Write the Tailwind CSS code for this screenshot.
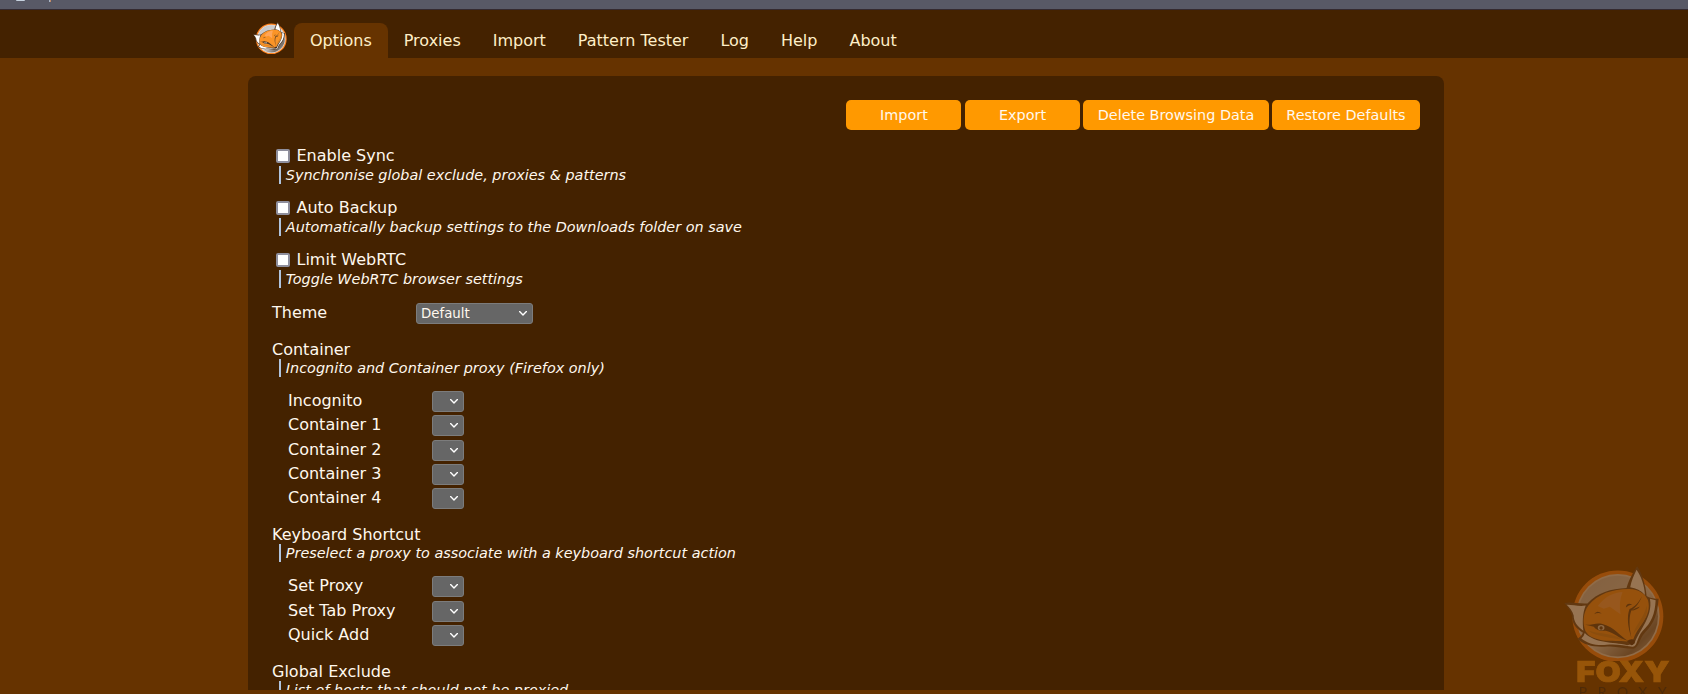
<!DOCTYPE html>
<html lang="en">
<head>
<meta charset="utf-8">
<title>FoxyProxy Options</title>
<script src="https://cdn.jsdelivr.net/npm/@tailwindcss/browser@4"></script>
</head>
<body class="h-[694px] overflow-hidden bg-[#663300] font-['DejaVu_Sans',sans-serif] text-base leading-[18px] text-[#fff8ee]">
<svg class="absolute size-0" xmlns="http://www.w3.org/2000/svg">
  <defs>
    <linearGradient id="silver" x1="0" y1="0" x2="1" y2="1"><stop offset="0" stop-color="#bfc1c6"/><stop offset=".55" stop-color="#d6d6d6"/><stop offset=".8" stop-color="#77706c"/><stop offset="1" stop-color="#c8c8c8"/></linearGradient>
  </defs>
  <symbol id="fox" viewBox="75 53 300 282" preserveAspectRatio="none">
    <circle cx="236" cy="202" r="136" fill="#ff8420"/>
    <circle cx="236" cy="202" r="125" fill="#e9e4e0"/>
    <circle cx="236" cy="202" r="120" fill="url(#silver)"/>
    <path d="M76 163C95 158 120 166 145 164C175 132 215 120 262 118C270 92 284 67 294 54C308 75 320 110 322 142Q336 151 358 150C354 195 346 222 316 252C300 270 300 294 282 299C258 299 230 290 204 292C170 296 134 288 115 270Q127 262 132 251C112 240 98 222 99 202C96 188 86 176 76 163Z" fill="#5c4634"/>
    <path d="M83 168C103 168 122 174 140 170C130 192 130 222 133 245C114 232 104 218 104 200C100 186 92 176 83 168Z" fill="#fff"/>
    <path d="M292 64C306 84 316 112 317 139C306 126 290 118 273 116C276 98 284 80 292 64Z" fill="#fff"/>
    <path d="M127 268Q134 264 137 252C170 284 220 278 264 288L286 283C294 250 342 206 332 150L349 155C347 196 336 222 310 246C292 266 296 290 280 293C254 288 228 284 202 287C172 290 145 283 127 268Z" fill="#fff"/>
    <path d="M148 170C176 134 226 120 270 121C300 122 318 136 326 154C340 205 292 232 281 276L264 277C222 274 160 282 139 246C130 220 132 192 148 170Z" fill="#fb9427"/>
    <path d="M176 172C200 140 225 132 250 130Q238 160 244 196L212 174L194 180Z" fill="#ffa65a"/>
    <path d="M146 244C172 266 222 264 254 274C220 250 176 256 146 244ZM322 170C316 204 290 226 281 256C300 232 330 210 322 170Z" fill="#d8862a"/>
    <path d="M134 227C158 230 170 220 190 225C226 234 244 262 266 275C240 268 220 248 200 245C182 247 170 242 164 233Q150 230 134 227Z" fill="#513823"/>
    <ellipse cx="186" cy="236" rx="10" ry="8" fill="#dcd6cf"/><circle cx="186" cy="237" r="5" fill="#513823"/>
    <path d="M165 196Q173 182 188 194Q174 191 165 196ZM260 176Q262 160 279 167Q268 168 260 176ZM308 142C302 162 290 174 276 186C267 210 272 246 277 268C266 236 262 204 271 181C286 174 299 162 308 142ZM276 185Q294 184 302 173Q288 177 276 185Z" fill="#513823"/>
    <path d="M263 276Q277 266 287 274Q286 288 276 288Z" fill="#3e2b22"/>
  </symbol>
  <symbol id="chevron" viewBox="0 0 8 5"><path d="M.6 .6L4 4L7.4 .6" fill="none" stroke="#fff" stroke-width="1.4" stroke-linecap="round" stroke-linejoin="round"/></symbol>
</svg>

<div class="relative h-[9px] bg-[#585966]">
  <div class="absolute top-0 left-4 h-px w-[9px] rounded-b bg-[#c6d2df]"></div>
  <div class="absolute top-0 left-[49px] h-0.5 w-px bg-[#a9b5c5]"></div>
  <div class="absolute top-0 left-[50px] h-0.5 w-px bg-[#c08a68]"></div>
</div>
<nav class="flex h-[49px] items-end border-t border-[#342a30] bg-[#442200] pl-[253px] text-[#ffefc8]">
  <svg class="mr-[7px] mb-1 h-[32px] w-[34px]"><use href="#fox"/></svg>
  <div class="flex h-[35px] items-center whitespace-nowrap">
    <a class="flex h-full items-center rounded-t-lg bg-[#663300] px-4">Options</a>
    <a class="px-4">Proxies</a>
    <a class="px-4">Import</a>
    <a class="px-4">Pattern Tester</a>
    <a class="px-4">Log</a>
    <a class="px-4">Help</a>
    <a class="px-4">About</a>
  </div>
</nav>

<main class="mt-[18px] ml-[248px] h-[614px] w-[1196px] overflow-hidden rounded-t-lg bg-[#442200] px-6 pt-6">
  <div class="flex h-[30px] justify-end gap-1 text-[14.4px] whitespace-nowrap">
    <button class="w-[115px] rounded-[5px] bg-[#ff9900] pl-px">Import</button>
    <button class="w-[115px] rounded-[5px] bg-[#ff9900]">Export</button>
    <button class="-ml-px w-[186px] rounded-[5px] bg-[#ff9900]">Delete Browsing Data</button>
    <button class="-ml-px w-[148px] rounded-[5px] bg-[#ff9900]">Restore Defaults</button>
  </div>

  <section class="mt-[17px] flex flex-col gap-4 whitespace-nowrap">
    <div class="h-9">
      <label class="flex h-[18px] items-center"><span class="mr-[6.5px] mb-px ml-1 size-3.5 rounded-xs border-2 border-[#8f8f9d] bg-white"></span>Enable Sync</label>
      <p class="mt-px ml-[7px] border-l-2 border-[#b0c4de] pl-[4.8px] text-[14.4px] italic">Synchronise global exclude, proxies &amp; patterns</p>
    </div>
    <div class="h-9">
      <label class="flex h-[18px] items-center"><span class="mr-[6.5px] mb-px ml-1 size-3.5 rounded-xs border-2 border-[#8f8f9d] bg-white"></span>Auto Backup</label>
      <p class="mt-px ml-[7px] border-l-2 border-[#b0c4de] pl-[4.8px] text-[14.4px] italic">Automatically backup settings to the Downloads folder on save</p>
    </div>
    <div class="h-9">
      <label class="flex h-[18px] items-center"><span class="mr-[6.5px] mb-px ml-1 size-3.5 rounded-xs border-2 border-[#8f8f9d] bg-white"></span>Limit WebRTC</label>
      <p class="mt-px ml-[7px] border-l-2 border-[#b0c4de] pl-[4.8px] text-[14.4px] italic">Toggle WebRTC browser settings</p>
    </div>
  </section>

  <div class="mt-4 flex h-[21px]">
    <span class="w-36 pt-px">Theme</span>
    <span class="flex h-[21px] w-[117px] items-center justify-between rounded-[3px] border border-[#7c7c7c] bg-[#666666] pr-[5px] pl-1 text-[13.33px]">Default<svg class="h-[5px] w-2"><use href="#chevron"/></svg></span>
  </div>

  <section class="mt-[17px] whitespace-nowrap">
    <h2>Container</h2>
    <p class="ml-[7px] border-l-2 border-[#b0c4de] pl-[4.8px] text-[14.4px] italic">Incognito and Container proxy (Firefox only)</p>
    <div class="mt-3.5 grid grid-cols-[144px_32px] grid-rows-[24px_25px_24px_24px_21px] pl-4">
      <span class="pt-px">Incognito</span><span class="flex h-[21px] items-center justify-end rounded-[3px] border border-[#7c7c7c] bg-[#666666] pr-[5px]"><svg class="h-[5px] w-2"><use href="#chevron"/></svg></span>
      <span class="pt-px">Container 1</span><span class="flex h-[21px] items-center justify-end rounded-[3px] border border-[#7c7c7c] bg-[#666666] pr-[5px]"><svg class="h-[5px] w-2"><use href="#chevron"/></svg></span>
      <span class="pt-px">Container 2</span><span class="flex h-[21px] items-center justify-end rounded-[3px] border border-[#7c7c7c] bg-[#666666] pr-[5px]"><svg class="h-[5px] w-2"><use href="#chevron"/></svg></span>
      <span class="pt-px">Container 3</span><span class="flex h-[21px] items-center justify-end rounded-[3px] border border-[#7c7c7c] bg-[#666666] pr-[5px]"><svg class="h-[5px] w-2"><use href="#chevron"/></svg></span>
      <span class="pt-px">Container 4</span><span class="flex h-[21px] items-center justify-end rounded-[3px] border border-[#7c7c7c] bg-[#666666] pr-[5px]"><svg class="h-[5px] w-2"><use href="#chevron"/></svg></span>
    </div>
  </section>

  <section class="mt-[17px] whitespace-nowrap">
    <h2>Keyboard Shortcut</h2>
    <p class="ml-[7px] border-l-2 border-[#b0c4de] pl-[4.8px] text-[14.4px] italic">Preselect a proxy to associate with a keyboard shortcut action</p>
    <div class="mt-3.5 grid grid-cols-[144px_32px] grid-rows-[25px_24px_21px] pl-4">
      <span class="pt-px">Set Proxy</span><span class="flex h-[21px] items-center justify-end rounded-[3px] border border-[#7c7c7c] bg-[#666666] pr-[5px]"><svg class="h-[5px] w-2"><use href="#chevron"/></svg></span>
      <span class="pt-px">Set Tab Proxy</span><span class="flex h-[21px] items-center justify-end rounded-[3px] border border-[#7c7c7c] bg-[#666666] pr-[5px]"><svg class="h-[5px] w-2"><use href="#chevron"/></svg></span>
      <span class="pt-px">Quick Add</span><span class="flex h-[21px] items-center justify-end rounded-[3px] border border-[#7c7c7c] bg-[#666666] pr-[5px]"><svg class="h-[5px] w-2"><use href="#chevron"/></svg></span>
    </div>
  </section>

  <section class="mt-[17px] whitespace-nowrap">
    <h2>Global Exclude</h2>
    <p class="ml-[7px] border-l-2 border-[#b0c4de] pl-[4.8px] text-[14.4px] italic">List of hosts that should not be proxied</p>
  </section>
</main>

<svg class="fixed right-0 bottom-0 h-36 w-[148px] opacity-32" viewBox="0 0 444 432">
  <use href="#fox" x="72" y="48" width="301" height="285"/>
  <text x="109" y="396" font-family="Inter" font-weight="900" font-size="87" fill="#ffa01c" stroke="#ffa01c" stroke-width="2" textLength="280" lengthAdjust="spacingAndGlyphs">FOXY</text>
  <text x="116" y="442" font-family="Lato" font-size="42" fill="#1a1a1a" textLength="264">PROXY</text>
</svg>
</body>
</html>
